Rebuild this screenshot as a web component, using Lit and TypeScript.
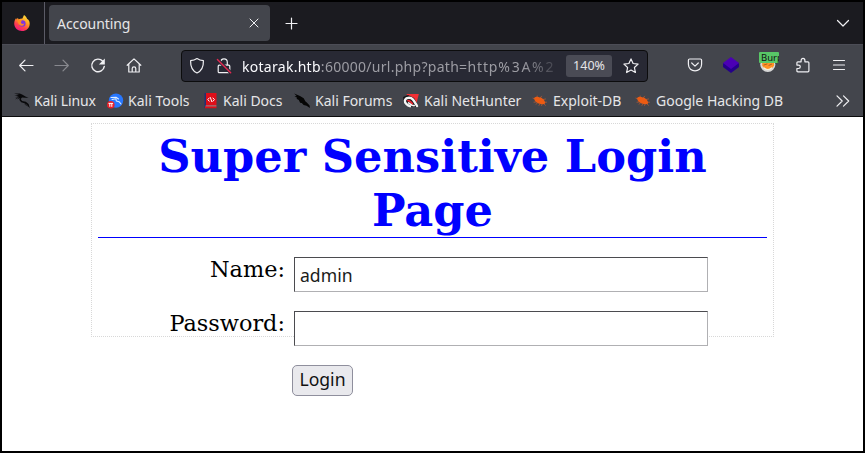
import { LitElement, html, css, svg } from "lit";
import { customElement } from "lit/decorators.js";

const icon = (w: number, h: number, body: unknown) =>
  html`<svg width=${w} height=${h} viewBox="0 0 ${w} ${h}" fill="none" stroke="#f0f0f3" stroke-width="1.2" stroke-linecap="round" stroke-linejoin="round">${body}</svg>`;

const dragon = svg`<path stroke="none" fill="#08080a" d="M0 .6 5.8.6 8.6 1.8 11.4 3.6 14.6 4.8 11.6 4.7 8 4.4 6.7 6 8 7.9 11.8 8.8 14.6 11.1 15.9 15.2 13.3 12 10.5 10.3 7.2 9.2 5.4 7.1 5.7 5.1 3 6.4 5 4.1 1 4.4 5 2.9.3 2.4 5 1.7Z"/><path stroke="#08080a" stroke-width=".6" d="M2 5.8 5.5 3.4M11 11.4l3.6 2"/>`;
const tools = svg`<circle cx="9" cy="7.6" r="7.2" fill="#2777ff" stroke="none"/><path stroke="#dcecff" stroke-width="1.1" d="M4 4.5 9 4.3 11.5 6M5 6.5 9 5.8M9 6 9.3 8 12 8.7 14 11"/><circle cx="3.8" cy="11.8" r="3.8" fill="#e8202a" stroke="none"/><path stroke="#fff" stroke-width="1" stroke-linecap="butt" d="M1.5 10.4h4.6M2.8 10.4v3.4M4.8 10.4v3.4"/>`;
const docs = svg`<path stroke="none" fill="#252e72" d="M2.5 0h2v15h-2z"/><path stroke="none" fill="#dd0e19" d="M4 0h10.5v12.5H4zM3 13.3h11.5v1.9H3z"/><path stroke="#ddd" stroke-width=".5" d="M4 12.9h10"/><path stroke="#fff" stroke-width="1" d="m7.2 5-1.4 1.6L7.2 8.2M8.4 4.6l1.4 4M11 5l1.4 1.6L11 8.2"/>`;
const forums = svg`<path stroke="none" fill="#050505" d="M.2.5 6 3.1 9.7 5.3 11.3 8.2 12.8 9.6 15.6 12.4 15.9 15 12.6 12.8 9.6 12 7.8 10 6.1 9.7 4.8 7 2.5 5.8 3.2 4.7.5 3.4 2.6 3Z"/>`;
const hunter = svg`<path stroke="none" fill="#f32f35" d="M3.5 1h12.3L13 12.5 7 8Z"/><path stroke="none" fill="#151518" d="M0 4 5 2 11 5 14 10 15 14H8L1 10Z"/><path stroke="#f5f5f5" stroke-width="2.4" d="M7 13.2C5 12.6 1.4 10.2 1.9 7.6 2.6 4.2 7.6 4 10 6.6c1.6 1.8 2.8 4.4 4 6.4"/><path stroke="#ef2731" stroke-width="1.8" d="M5 7.6c1.8-.4 2.8 1 4.3 3.2"/><path stroke="#f5f5f5" stroke-width="1.6" d="m5.6 9.8 3.2 2.4 2.4.4"/>`;
const bug = svg`<path stroke="none" fill="#ec5b12" d="M2 4.9C3.6 3.4 6 3.3 7.8 4.6l1.7.1 2.4 2 1.4 2.8-.8 1.6-2.7.2-3.2-.9L4 9 2.6 7.2Z"/><path stroke="#d9602a" stroke-width=".6" d="m5 4 .2-1M8 5l1.6-1.8M11 6.5l2.5-.5M13 9.2h1.6M4 9l-2 .2M5.5 10l-1.5 1.2M8 11l-1 1.4M10 11.5l-.4 1M3 6 1 5.2M12 11l1.5 1.3"/>`;

const bookmarks: [string, unknown][] = [
  ["Kali Linux", dragon],
  ["Kali Tools", tools],
  ["Kali Docs", docs],
  ["Kali Forums", forums],
  ["Kali NetHunter", hunter],
  ["Exploit-DB", bug],
  ["Google Hacking DB", bug],
];

@customElement("app-root")
export class AppRoot extends LitElement {
  static styles = css`
    * { box-sizing: border-box; }
    :host {
      display: flex; flex-direction: column; width: 865px; height: 453px;
      box-sizing: border-box; border: 2px solid #000; background: #fff; overflow: hidden;
      font-family: "Noto Sans", "Open Sans", sans-serif; font-size: 14px; color: #e6e6e8;
    }
    svg { display: block; flex: none; overflow: visible; }
    .tabs { height: 43px; display: flex; align-items: center; background: #1b1b20; border-bottom: 1px solid #4c4d56; flex: none; }
    .pin { width: 43px; height: 42px; border-right: 1px solid #5b5b66; display: flex; align-items: center; padding-left: 12px; }
    .tab { margin-left: 4px; width: 221px; height: 36px; border-radius: 4px; background: #43454c; display: flex; align-items: center; padding: 0 12px 0 8px; }
    .tab-title { flex: 1; line-height: 20px; padding-top: 1px; letter-spacing: -.07px; }
    .plus { margin-left: 15px; }
    .down { margin: 0 14px 0 auto; }
    .nav { height: 42px; background: #43454c; display: flex; align-items: center; flex: none; padding: 0 0 2px 16px; }
    .back { margin-right: 20px; }
    .forward { margin-right: 20px; opacity: .4; }
    .reload { margin-right: 20px; }
    .url { margin-left: 39px; width: 467px; height: 32px; border: 1px solid #0c0c0d; border-radius: 4px; background: #282934; display: flex; align-items: center; padding: 0 7px; }
    .nav .url { position: relative; top: 1px; }
    .shield { margin-right: 11px; }
    .address { margin-left: 10px; width: 315px; white-space: nowrap; color: #9c9ca3; letter-spacing: .28px; -webkit-mask-image: linear-gradient(to right, #000 280px, transparent 322px); mask-image: linear-gradient(to right, #000 280px, transparent 322px); }
    .host { color: #fbfbfe; }
    .scheme { letter-spacing: .9px; }
    .escaped { letter-spacing: 1.7px; }
    .zoom { margin-left: 9px; width: 46px; height: 22px; border-radius: 3px; background: #4a4b55; text-align: center; font-size: 12.5px; line-height: 22px; }
    .star { margin-left: 11px; }
    .tools { display: flex; align-items: center; margin-left: 39px; }
    .layers { margin-left: 20px; }
    .burp { margin-left: 20px; width: 20px; height: 20px; position: relative; }
    .badge { position: absolute; left: 0; top: -3px; width: 20px; height: 11px; border-radius: 1px; background: #58c767; color: #111; font-size: 9.5px; line-height: 11px; padding-left: 2px; overflow: hidden; }
    .puzzle { margin-left: 16px; }
    .menu { margin-left: 22px; }
    .bookmarks { height: 30px; background: #43454c; border-bottom: 1px solid #0c0c0d; flex: none; display: grid; grid-template-columns: 93px 95px 92px 109px 129px 103px 200px auto; align-items: center; padding-left: 12px; padding-bottom: 2px; }
    .bookmark { display: flex; align-items: center; gap: 5px; white-space: nowrap; line-height: 20px; }
    .bookmark:first-child { gap: 4px; letter-spacing: -.12px; }
    .page { flex: 1; min-height: 0; background: #fff; color: #000; padding: 6px 0 0 89px; font-family: "DejaVu Serif", serif; font-size: 22.4px; }
    .frame { width: 683px; height: 214px; border: 1px dotted #d8d8d8; padding: 5px 6px 0; }
    .heading { margin: 0 0 19px; padding-top: 1px; height: 109px; border-bottom: 1px solid #00f; color: #00f; font-size: 44.7px; font-weight: bold; line-height: 54px; text-align: center; }
    .field { display: flex; height: 35px; margin-bottom: 19px; }
    .label { width: 187px; margin-right: 9px; text-align: right; line-height: 24px; }
    .input { width: 414px; height: 35px; border: 1px solid; border-color: #4b4b4f #b0b0b3 #b0b0b3 #4b4b4f; border-radius: 0; outline: 0; background: #fff; padding: 1px 5px 0; font: 17.6px "Noto Sans", sans-serif; color: #1a1a1a; }
    .login { display: block; margin-left: 194px; width: 61px; height: 31px; padding: 0 0 2px; border: 1px solid #8f8f9d; border-radius: 5px; background: #e9e9ed; color: #111; font: 17.6px/27px "Noto Sans", sans-serif; }
  `;

  render() {
    return html`
      <div class="tabs">
        <div class="pin">
          <svg width="16" height="16" viewBox="0 0 16 16">
            <defs><linearGradient id="fox" x1=".8" y1="0" x2=".25" y2="1"><stop stop-color="#ffe940"/><stop offset=".4" stop-color="#ff9b20"/><stop offset=".7" stop-color="#ff3f4f"/><stop offset="1" stop-color="#ee1684"/></linearGradient></defs>
            <path fill="url(#fox)" d="M8.4 3.5 10 0c2 1.3 2.6 2.4 3.2 4 1-.1 2.5 2.2 2.5 4.4C15.7 13 12.3 16 8 16S.2 13 .2 8.5C.2 6 1.2 4.2 2.2 3l.3 1.4L4 2.7l.4 1.6c1.4-.4 2.8-.5 4-.8Z"/>
            <circle cx="8.3" cy="8.5" r="3.3" fill="#8034df"/><path fill="#ff8a20" d="M3.2 5.4C5 4.3 6.8 4.7 8 5.8L6.8 7c.2 1.8 2 2.4 3.5 1.4-.4 3-5.2 3.1-6-.1Z"/>
          </svg>
        </div>
        <div class="tab"><span class="tab-title">Accounting</span>${icon(8, 8, svg`<path stroke-width="1" d="m0 0 8 8M8 0 0 8"/>`)}</div>
        <div class="plus">${icon(12, 12, svg`<path d="M6.5 1v11M1 6.5h11"/>`)}</div>
        <div class="down">${icon(12, 7, svg`<path d="m.5.5 5.5 5.5L11.5.5"/>`)}</div>
      </div>
      <div class="nav">
        <div class="back">${icon(16, 16, svg`<path d="M15 8.5H2M7 3.2 1.7 8.5 7 13.8"/>`)}</div>
        <div class="forward">${icon(16, 16, svg`<path d="M1 8.5h13M9 3.2l5.3 5.3L9 13.8"/>`)}</div>
        <div class="reload">${icon(16, 16, svg`<path stroke-width="1.4" d="M12.8 4.3A6.3 6.3 0 1 0 14.3 9.4"/><path fill="#f0f0f3" stroke="none" d="M14.8 1.5v6H8.9Z"/>`)}</div>
        ${icon(16, 16, svg`<path d="M1.2 8.3 8 1.9l6.8 6.4M2.8 7.3V15h10.4V7.3M6.2 14.8v-3.3c0-2.3 3.6-2.3 3.6 0v3.3"/>`)}
        <div class="url">
          <div class="shield">${icon(16, 16, svg`<path d="M8 .6c2 1.4 4 2 6.4 2.1.2 5.7-1.5 10-6.4 12.3C3.1 12.7 1.4 8.4 1.6 2.7 4 2.6 6 2 8 .6Z"/>`)}</div>
          ${icon(16, 16, svg`<path d="M4.7 7V4.3C4.7-.2 11.3-.2 11.3 4.3V7M3.2 7.2h9.6c.7 0 1 .4 1 1v5.3c0 .7-.4 1.2-1 1.2H3.2c-.6 0-1-.5-1-1.2V8.2c0-.6.4-1 1-1Z"/><path stroke="#282934" stroke-width="3.2" d="m2 2 12.5 12.5"/><path stroke="#e22850" stroke-width="1.4" d="m1.4 1.5 13.3 13.3"/>`)}
          <div class="address"><span class="host">kotarak.htb</span>:60000/url.php?path=<span class="scheme">http</span><span class="escaped">%3A%2</span></div>
          <div class="zoom">140%</div>
          <div class="star">${icon(16, 16, svg`<path d="m8 .9 2.1 4.6 5 .6-3.7 3.4 1 5L8 12l-4.4 2.5 1-5L.9 6.1l5-.6Z"/>`)}</div>
        </div>
        <div class="tools">
          ${icon(16, 16, svg`<path d="M2.6 2h10.8c.8 0 1.2.5 1.2 1.2v4.1c0 8.8-13.2 8.8-13.2 0V3.2C1.4 2.5 1.8 2 2.6 2ZM4.7 6 8 9.1 11.3 6"/>`)}
          <div class="layers">${icon(16, 16, svg`<path stroke="none" fill="#25008a" d="M0 6.5 8 2l8 4.5V10l-8 6-8-6Z"/><path stroke="none" fill="#4b00b5" d="m8 0 8 6-8 6-8-6Z"/>`)}</div>
          <div class="burp">${icon(20, 20, svg`<circle cx="8.8" cy="9.4" r="7.6" fill="#d6d6d6" stroke="none"/><path fill="#ff9225" stroke="none" d="M3.2 7H15v3.6c-2 5-9.8 5-11.8 0Z"/><path stroke="#9c5221" stroke-width=".8" d="m5 10 3-1M10 10.3l2.5-1"/><path stroke="#f9f1d9" d="M5 13c2 2 5.6 2 7.6 0"/>`)}<span class="badge">Burp</span></div>
          <div class="puzzle">${icon(16, 16, svg`<path d="M2.9 4.8h3.2V3.5c0-2.8 3.8-2.8 3.8 0v1.3h3c.7 0 1 .3 1 1v8c0 .7-.3 1-1 1h-10c-.7 0-1-.3-1-1v-2.3h1.6c2.4 0 2.4-3.4 0-3.4H1.9V5.8c0-.7.3-1 1-1Z"/>`)}</div>
          <div class="menu">${icon(12, 12, svg`<path stroke-width="1.2" d="M.5 1.5h11M.5 6h11M.5 10.5h11"/>`)}</div>
        </div>
      </div>
      <div class="bookmarks">
        ${bookmarks.map(([name, art]) => html`<div class="bookmark">${icon(16, 16, art)}<span>${name}</span></div>`)}
        ${icon(14, 12, svg`<path d="m2 .8 5.2 5.2L2 11.2M8.5.8 13.7 6 8.5 11.2"/>`)}
      </div>
      <div class="page">
        <div class="frame">
          <h1 class="heading">Super Sensitive Login Page</h1>
          <div class="field"><label class="label" for="name">Name:</label><input class="input" id="name" type="text" value="admin"></div>
          <div class="field"><label class="label" for="password">Password:</label><input class="input" id="password" type="password"></div>
          <button class="login">Login</button>
        </div>
      </div>
    `;
  }
}
